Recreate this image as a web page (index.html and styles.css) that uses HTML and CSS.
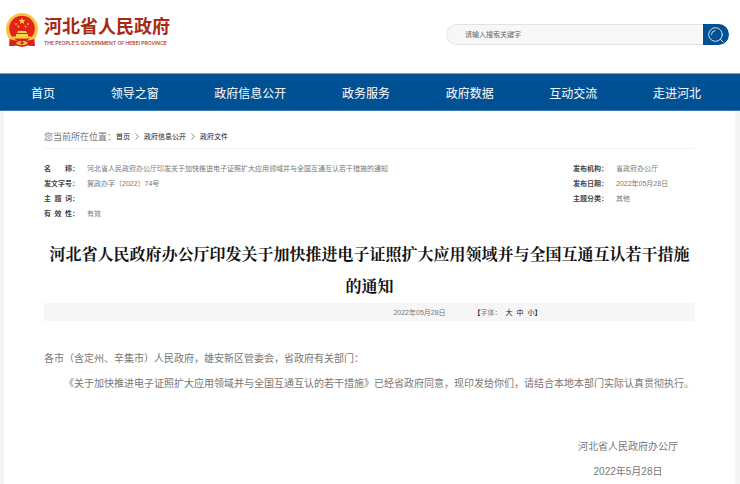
FILE: index.html
```html
<!DOCTYPE html>
<html lang="zh-CN">
<head>
<meta charset="utf-8">
<title>河北省人民政府</title>
<link rel="stylesheet" href="styles.css">
</head>
<body>
<header class="header">
  <a class="brand" href="#">
    <svg class="emblem" viewBox="0 0 32 34" aria-hidden="true">
      <path d="M5 22 L3.500 33 L10 32.500 L16 34 L22 32.500 L28.500 33 L27 22 Z" fill="#d8201c"/>
      <circle cx="16" cy="16" r="16" fill="#f6c443"/>
      <circle cx="16" cy="15.500" r="12.800" fill="#e3221b"/>
      <path d="M16 4.500l.9 2.400 2.600.1-2 1.600.7 2.500-2.200-1.400-2.200 1.400.7-2.500-2-1.600 2.600-.1z" fill="#f8d34b"/>
      <g fill="#f3b73c"><circle cx="10" cy="11" r="1"/><circle cx="12.500" cy="13.500" r="1"/><circle cx="19.500" cy="13.500" r="1"/><circle cx="22" cy="11" r="1"/></g>
      <path d="M12 18h8l1 2h-10zM10 21h12v2.500h3.500v2h-19v-2H10z" fill="#f8d34b"/>
      <path d="M3.500 26l5.500 1.500 4-.5h6l4 .5 5.500-1.500 .3 7-5.800-.5-2-2.500H11l-2 2.500-5.800.5z" fill="#d8201c"/>
      <path d="M10 29.500l3-1.500h6l3 1.500-3 2h-6z" fill="#f3b73c"/>
      <circle cx="16" cy="29.700" r="1.500" fill="#d8201c"/>
    </svg>
    <span class="brand-text">
      <span class="brand-name">河北省人民政府</span>
      <span class="brand-en">THE PEOPLE'S GOVERNMENT OF HEBEI PROVINCE</span>
    </span>
  </a>
  <form class="search">
    <input class="search-input" type="text" placeholder="请输入搜索关键字" aria-label="请输入搜索关键字">
    <button class="search-button" type="button" aria-label="搜索">
      <svg class="search-icon" viewBox="0 0 16 16" aria-hidden="true">
        <g fill="none" stroke="#cfe3f5" stroke-linecap="round">
          <circle cx="7.500" cy="7.500" r="6.800"/>
          <path d="M12.300 12.300L15 15M3.500 7.500a4 4 0 0 1 3.500-4"/>
        </g>
      </svg>
    </button>
  </form>
</header>
<nav class="nav">
  <a href="#">首页</a>
  <a href="#">领导之窗</a>
  <a href="#">政府信息公开</a>
  <a href="#">政务服务</a>
  <a href="#">政府数据</a>
  <a href="#">互动交流</a>
  <a href="#">走进河北</a>
</nav>
<main class="page">
  <div class="crumbs">
    <span class="crumbs-label">您当前所在位置：</span>
    <div class="crumbs-path">
      <a href="#">首页</a>
      <svg class="chevron" viewBox="0 0 4 7" aria-hidden="true"><path d="M.5.5l3 3-3 3"/></svg>
      <a href="#">政府信息公开</a>
      <svg class="chevron" viewBox="0 0 4 7" aria-hidden="true"><path d="M.5.5l3 3-3 3"/></svg>
      <a href="#">政府文件</a>
    </div>
  </div>
  <div class="meta">
    <dl class="meta-list">
      <dt>名　　称：</dt><dd>河北省人民政府办公厅印发关于加快推进电子证照扩大应用领域并与全国互通互认若干措施的通知</dd>
      <dt>发文字号：</dt><dd>冀政办字〔2022〕74号</dd>
      <dt>主&ensp;题&ensp;词：</dt><dd></dd>
      <dt>有&ensp;效&ensp;性：</dt><dd>有效</dd>
    </dl>
    <dl class="meta-list meta-side">
      <dt>发布机构：</dt><dd>省政府办公厅</dd>
      <dt>发布日期：</dt><dd>2022年05月28日</dd>
      <dt>主题分类：</dt><dd>其他</dd>
    </dl>
  </div>
  <article>
    <h1 class="title">河北省人民政府办公厅印发关于加快推进电子证照扩大应用领域并与全国互通互认若干措施的通知</h1>
    <div class="info">
      <time datetime="2022-05-28">2022年05月28日</time>
      <div class="sizes">
        <span><b>【</b>字体：</span>
        <button type="button">大</button>
        <button type="button">中</button>
        <button type="button">小</button><b class="close">】</b>
      </div>
    </div>
    <div class="body">
      <p>各市（含定州、辛集市）人民政府，雄安新区管委会，省政府有关部门：</p>
      <p class="indent">《关于加快推进电子证照扩大应用领域并与全国互通互认的若干措施》已经省政府同意，现印发给你们，请结合本地本部门实际认真贯彻执行。</p>
      <div class="signature">
        <p>河北省人民政府办公厅</p>
        <p>2022年5月28日</p>
      </div>
    </div>
  </article>
</main>
</body>
</html>
```
FILE: styles.css
```css
* {
  box-sizing: border-box;
}

body {
  display: flex;
  flex-direction: column;
  min-height: 100vh;
  margin: 0;
  background: #f4f4f4;
  color: #777;
  font-family: "Liberation Sans", "Noto Sans CJK SC", sans-serif;
  font-size: 7px;
}

a {
  color: inherit;
  text-decoration: none;
}

button {
  padding: 0;
  border: 0;
  background: none;
  color: inherit;
  font: inherit;
}

p, dl, dd {
  margin: 0;
}

.header {
  display: flex;
  align-items: flex-start;
  justify-content: space-between;
  height: 73px;
  padding: 13px 11px 0 6px;
  background: #fff;
}

.brand {
  display: flex;
  gap: 6px;
  color: #a92a13;
}

.emblem {
  width: 32px;
  height: 34px;
}

.brand-text {
  display: flex;
  flex-direction: column;
  padding-top: 3px;
}

.brand-name {
  font-size: 18px;
  font-weight: 700;
  line-height: 22px;
}

.brand-en {
  font-family: Inter, "Noto Sans", sans-serif;
  font-size: 5px;
  font-weight: 500;
  line-height: 10px;
  white-space: nowrap;
}

.search {
  display: flex;
  width: 283px;
  height: 21px;
  margin-top: 11px;
  overflow: hidden;
  border-radius: 11px;
}

.search-input {
  flex: 1;
  min-width: 0;
  padding: 0 18px;
  border: 1px solid #e2e2e2;
  border-right: 0;
  border-radius: 11px 0 0 11px;
  background: #f7f7f7;
  color: #666;
  font: inherit;
}

.search-input::placeholder {
  color: #666;
}

.search-button {
  display: flex;
  align-items: center;
  justify-content: center;
  width: 26px;
  background: #005193;
}

.search-icon {
  width: 16px;
  height: 16px;
}

.nav {
  display: flex;
  align-items: center;
  justify-content: space-between;
  height: 38px;
  padding: 0 39px 0 31px;
  border-top: 1px solid #78a5ca;
  border-bottom: 1px solid #3b7bb0;
  background: #005193;
  color: #fff;
  font-size: 12px;
}

.page {
  flex: 1;
  margin: 0 5px 0 4px;
  padding: 13px 40px 0;
  background: #fff;
}

.crumbs {
  display: flex;
  align-items: center;
  height: 25px;
  border-bottom: 1px solid #f4f4f4;
}

.crumbs-label {
  font-size: 9px;
}

.crumbs-path {
  display: flex;
  align-items: center;
  gap: 5px;
  color: #222;
}

.chevron {
  width: 4px;
  height: 7px;
  fill: none;
  stroke: #888;
}

.meta {
  display: flex;
  justify-content: space-between;
  padding: 12px 0 17px;
  line-height: 15px;
}

.meta-list {
  display: grid;
  grid-template-columns: 43px 1fr;
  grid-auto-rows: 15px;
}

.meta-side {
  width: 122px;
}

.meta dt {
  color: #444;
  font-weight: 700;
}

.title {
  margin: 0;
  padding-top: 1px;
  color: #111;
  font-family: "Liberation Serif", "Noto Serif CJK SC", "Noto Sans CJK SC", serif;
  font-size: 16px;
  font-weight: 700;
  line-height: 32px;
  text-align: center;
}

.info {
  display: flex;
  align-items: center;
  justify-content: center;
  gap: 28px;
  height: 18px;
  padding-left: 196px;
  background: #f6f6f6;
}

.sizes {
  display: flex;
  gap: 4px;
}

.sizes button, .sizes b {
  color: #222;
}

.sizes .close {
  margin-left: -4px;
}

.body {
  padding-top: 25px;
  font-size: 10px;
  line-height: 25px;
}

.indent {
  text-indent: 2em;
}

.signature {
  width: fit-content;
  margin: 38px 17px 0 auto;
  text-align: center;
}
```
